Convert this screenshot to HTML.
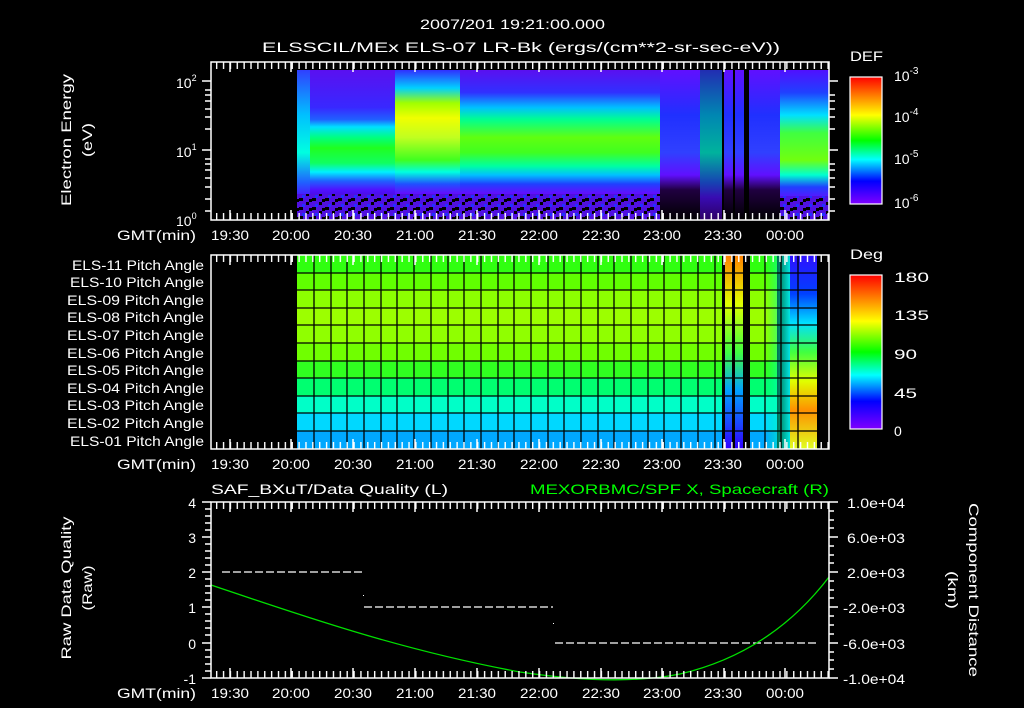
<!DOCTYPE html>
<html><head><meta charset="utf-8"><style>
html,body{margin:0;padding:0;background:#000;}
svg{display:block}
text{font-family:"Liberation Sans",sans-serif;fill:#fff;font-size:14px}
</style></head><body>
<svg width="1024" height="708" viewBox="0 0 1024 708" xmlns="http://www.w3.org/2000/svg">
<defs>
<linearGradient id="cb" x1="0" y1="0" x2="0" y2="1">
<stop offset="0" stop-color="#ff0000"/><stop offset="0.15" stop-color="#ff8000"/><stop offset="0.3" stop-color="#ffff00"/><stop offset="0.5" stop-color="#00ff00"/><stop offset="0.65" stop-color="#00ffff"/><stop offset="0.82" stop-color="#0000ff"/><stop offset="1" stop-color="#8000ff"/></linearGradient>
<linearGradient id="g0" x1="0" y1="0" x2="0" y2="1">
<stop offset="0" stop-color="#3040ff"/><stop offset="0.3" stop-color="#00c0ff"/><stop offset="0.55" stop-color="#00ffe0"/><stop offset="0.75" stop-color="#2060ff"/><stop offset="0.85" stop-color="#5010ff"/><stop offset="1" stop-color="#400090"/></linearGradient>
<linearGradient id="g1" x1="0" y1="0" x2="0" y2="1">
<stop offset="0" stop-color="#5a10f0"/><stop offset="0.25" stop-color="#3828ff"/><stop offset="0.33" stop-color="#2060ff"/><stop offset="0.38" stop-color="#00e0ff"/><stop offset="0.45" stop-color="#00ff80"/><stop offset="0.52" stop-color="#20ff20"/><stop offset="0.62" stop-color="#10ff60"/><stop offset="0.68" stop-color="#00f0ff"/><stop offset="0.74" stop-color="#2060ff"/><stop offset="0.8" stop-color="#5010ff"/><stop offset="1" stop-color="#300070"/></linearGradient>
<linearGradient id="g2" x1="0" y1="0" x2="0" y2="1">
<stop offset="0" stop-color="#3030ff"/><stop offset="0.12" stop-color="#00d0ff"/><stop offset="0.22" stop-color="#a0ff00"/><stop offset="0.32" stop-color="#f0ff00"/><stop offset="0.45" stop-color="#c0ff20"/><stop offset="0.6" stop-color="#40ff20"/><stop offset="0.68" stop-color="#00ffe0"/><stop offset="0.76" stop-color="#2050ff"/><stop offset="0.82" stop-color="#6010ff"/><stop offset="1" stop-color="#300070"/></linearGradient>
<linearGradient id="g3" x1="0" y1="0" x2="0" y2="1">
<stop offset="0" stop-color="#5a10f0"/><stop offset="0.15" stop-color="#3030ff"/><stop offset="0.25" stop-color="#00c0ff"/><stop offset="0.33" stop-color="#00ff90"/><stop offset="0.45" stop-color="#60ff10"/><stop offset="0.55" stop-color="#40ff20"/><stop offset="0.64" stop-color="#00ffa0"/><stop offset="0.7" stop-color="#00c0ff"/><stop offset="0.76" stop-color="#2040ff"/><stop offset="0.82" stop-color="#6010ff"/><stop offset="1" stop-color="#300070"/></linearGradient>
<linearGradient id="g4" x1="0" y1="0" x2="0" y2="1">
<stop offset="0" stop-color="#6010ff"/><stop offset="0.3" stop-color="#2030ff"/><stop offset="0.55" stop-color="#3040ff"/><stop offset="0.7" stop-color="#6010ff"/><stop offset="0.8" stop-color="#200040"/><stop offset="1" stop-color="#000"/></linearGradient>
<linearGradient id="g5" x1="0" y1="0" x2="0" y2="1">
<stop offset="0" stop-color="#5010ff"/><stop offset="0.15" stop-color="#2040ff"/><stop offset="0.3" stop-color="#00e0ff"/><stop offset="0.42" stop-color="#40ff40"/><stop offset="0.6" stop-color="#70ff10"/><stop offset="0.7" stop-color="#00ffd0"/><stop offset="0.78" stop-color="#2040ff"/><stop offset="0.86" stop-color="#6010ff"/><stop offset="1" stop-color="#300070"/></linearGradient>
<linearGradient id="pv" x1="0" y1="0" x2="0" y2="1"><stop offset="0" stop-color="#ff8000"/><stop offset="0.25" stop-color="#e0ff00"/><stop offset="0.5" stop-color="#40ff40"/><stop offset="0.7" stop-color="#00a0ff"/><stop offset="1" stop-color="#3000ff"/></linearGradient>
<linearGradient id="pr" x1="0" y1="0" x2="0" y2="1"><stop offset="0" stop-color="#3010ff"/><stop offset="0.2" stop-color="#0040ff"/><stop offset="0.35" stop-color="#00e0ff"/><stop offset="0.5" stop-color="#40ff40"/><stop offset="0.65" stop-color="#e0ff00"/><stop offset="0.8" stop-color="#ff9000"/><stop offset="1" stop-color="#e0ff20"/></linearGradient>
<linearGradient id="ph" x1="0" y1="0" x2="1" y2="0"><stop offset="0" stop-color="#00ff80" stop-opacity="0"/><stop offset="1" stop-color="#00ffff" stop-opacity="0.9"/></linearGradient>
<pattern id="noise" width="13" height="9" patternUnits="userSpaceOnUse">
<rect width="13" height="9" fill="#5010e0"/><rect x="0" y="0" width="4" height="3" fill="#000"/><rect x="7" y="4" width="3" height="3" fill="#000"/><rect x="3" y="6" width="3" height="3" fill="#2030ff"/><rect x="10" y="1" width="3" height="3" fill="#000"/></pattern>
<pattern id="tk" x="3" width="6.87" height="10" patternUnits="userSpaceOnUse"><rect x="0" y="0" width="1.4" height="10" fill="#fff"/></pattern>
</defs>

<text x="420" y="29" font-size="16" textLength="185" lengthAdjust="spacingAndGlyphs">2007/201 19:21:00.000</text>
<text x="262" y="52" font-size="16" textLength="518" lengthAdjust="spacingAndGlyphs">ELSSCIL/MEx ELS-07 LR-Bk  (ergs/(cm**2-sr-sec-eV))</text>

<!-- Panel 1 -->
<rect x="297" y="70" width="13" height="150" fill="url(#g0)"/>
<rect x="310" y="70" width="85" height="150" fill="url(#g1)"/>
<rect x="395" y="70" width="65" height="150" fill="url(#g2)"/>
<rect x="460" y="70" width="200" height="150" fill="url(#g3)"/>
<rect x="660" y="70" width="40" height="150" fill="url(#g4)"/>
<rect x="700" y="70" width="22" height="150" fill="url(#g0)" opacity="0.7"/>
<rect x="722" y="70" width="58" height="150" fill="url(#g4)"/>
<rect x="780" y="70" width="49" height="150" fill="url(#g5)"/>
<rect x="297" y="194" width="363" height="26" fill="url(#noise)"/>
<rect x="780" y="196" width="49" height="24" fill="url(#noise)"/>
<rect x="722" y="70" width="2" height="150" fill="#000"/>
<rect x="733" y="70" width="2" height="150" fill="#000"/>
<rect x="744" y="70" width="5" height="150" fill="#000"/>
<rect x="211" y="62" width="618" height="158" fill="none" stroke="#fff" stroke-width="1.5"/>
<rect x="211" y="62" width="618" height="7" fill="url(#tk)"/>
<rect x="211" y="213" width="618" height="7" fill="url(#tk)"/>
<g stroke="#fff" stroke-width="1.5">
<path d="M230 62v10M291 62v10M353 62v10M415 62v10M477 62v10M539 62v10M601 62v10M662 62v10M724 62v10M785 62v10M230 220v-10M291 220v-10M353 220v-10M415 220v-10M477 220v-10M539 220v-10M601 220v-10M662 220v-10M724 220v-10M785 220v-10"/>
<path d="M202 81h9M202 150h9M205 199h6M205 187h6M205 178h6M205 170h6M205 164h6M205 159h6M205 129h6M205 117h6M205 109h6M205 101h6M205 95h6M205 90h6M829 81h9M829 150h9M829 199h6M829 187h6M829 178h6M829 170h6M829 164h6M829 129h6M829 117h6M829 109h6M829 101h6M829 95h6M205 211h6M829 211h6"/>
</g>
<text x="176" y="88" font-size="14">10<tspan font-size="9" dy="-7">2</tspan></text>
<text x="176" y="157" font-size="14">10<tspan font-size="9" dy="-7">1</tspan></text>
<text x="176" y="226" font-size="14">10<tspan font-size="9" dy="-7">0</tspan></text>
<text transform="translate(71 140) rotate(-90)" text-anchor="middle" font-size="15" textLength="132" lengthAdjust="spacingAndGlyphs">Electron Energy</text>
<text transform="translate(92 140) rotate(-90)" text-anchor="middle" font-size="15" textLength="34" lengthAdjust="spacingAndGlyphs">(eV)</text>
<g font-size="14">
<text x="117" y="240" textLength="79" lengthAdjust="spacingAndGlyphs">GMT(min)</text>
<text x="230" y="240" text-anchor="middle" textLength="38" lengthAdjust="spacingAndGlyphs">19:30</text><text x="291" y="240" text-anchor="middle" textLength="38" lengthAdjust="spacingAndGlyphs">20:00</text><text x="353" y="240" text-anchor="middle" textLength="38" lengthAdjust="spacingAndGlyphs">20:30</text><text x="415" y="240" text-anchor="middle" textLength="38" lengthAdjust="spacingAndGlyphs">21:00</text><text x="477" y="240" text-anchor="middle" textLength="38" lengthAdjust="spacingAndGlyphs">21:30</text><text x="539" y="240" text-anchor="middle" textLength="38" lengthAdjust="spacingAndGlyphs">22:00</text><text x="601" y="240" text-anchor="middle" textLength="38" lengthAdjust="spacingAndGlyphs">22:30</text><text x="662" y="240" text-anchor="middle" textLength="38" lengthAdjust="spacingAndGlyphs">23:00</text><text x="723" y="240" text-anchor="middle" textLength="38" lengthAdjust="spacingAndGlyphs">23:30</text><text x="785" y="240" text-anchor="middle" textLength="38" lengthAdjust="spacingAndGlyphs">00:00</text>
</g>
<text x="850" y="61" font-size="16" textLength="33" lengthAdjust="spacingAndGlyphs">DEF</text>
<rect x="850" y="77" width="32" height="127" fill="url(#cb)" stroke="#fff" stroke-width="1.2"/>
<g font-size="16"><text x="894" y="81">10<tspan font-size="10" dy="-7">-3</tspan></text><text x="894" y="122">10<tspan font-size="10" dy="-7">-4</tspan></text><text x="894" y="164">10<tspan font-size="10" dy="-7">-5</tspan></text><text x="894" y="208">10<tspan font-size="10" dy="-7">-6</tspan></text></g>

<!-- Panel 2 -->
<rect x="297" y="255" width="480" height="18" fill="#30ff10"/>
<rect x="297" y="273" width="480" height="17" fill="#60ff00"/>
<rect x="297" y="290" width="480" height="18" fill="#8cff00"/>
<rect x="297" y="308" width="480" height="17" fill="#9cff00"/>
<rect x="297" y="325" width="480" height="18" fill="#90ff00"/>
<rect x="297" y="343" width="480" height="18" fill="#70ff00"/>
<rect x="297" y="361" width="480" height="17" fill="#30ff20"/>
<rect x="297" y="378" width="480" height="18" fill="#00ff70"/>
<rect x="297" y="396" width="480" height="17" fill="#00ffc8"/>
<rect x="297" y="413" width="480" height="18" fill="#00d8ff"/>
<rect x="297" y="431" width="480" height="18" fill="#00a8ff"/>
<rect x="722" y="255" width="28" height="194" fill="url(#pv)"/>
<rect x="765" y="255" width="25" height="194" fill="url(#ph)"/>
<rect x="790" y="255" width="27" height="194" fill="url(#pr)"/>
<rect x="722" y="255" width="3" height="194" fill="#000"/>
<rect x="732" y="255" width="3" height="194" fill="#000"/>
<rect x="743" y="255" width="7" height="194" fill="#000"/>
<g stroke="#000" stroke-width="1.3">
<path d="M297 273h520M297 290h520M297 308h520M297 325h520M297 343h520M297 361h520M297 378h520M297 396h520M297 413h520M297 431h520"/>
<path d="M314 255v194M331 255v194M347 255v194M364 255v194M381 255v194M397 255v194M414 255v194M431 255v194M448 255v194M464 255v194M481 255v194M498 255v194M514 255v194M531 255v194M548 255v194M564 255v194M581 255v194M598 255v194M614 255v194M631 255v194M648 255v194M664 255v194M681 255v194M698 255v194M715 255v194M765 255v194M781 255v194M798 255v194"/>
</g>
<rect x="211" y="255" width="618" height="194" fill="none" stroke="#fff" stroke-width="1.5"/>
<rect x="211" y="255" width="618" height="7" fill="url(#tk)"/>
<rect x="211" y="442" width="618" height="7" fill="url(#tk)"/>
<g stroke="#fff" stroke-width="1.5"><path d="M230 255v10M291 255v10M353 255v10M415 255v10M477 255v10M539 255v10M601 255v10M662 255v10M724 255v10M785 255v10M230 449v-10M291 449v-10M353 449v-10M415 449v-10M477 449v-10M539 449v-10M601 449v-10M662 449v-10M724 449v-10M785 449v-10"/></g>
<g font-size="14">
<text x="72" y="270" textLength="132" lengthAdjust="spacingAndGlyphs">ELS-11 Pitch Angle</text><text x="70" y="287" textLength="134" lengthAdjust="spacingAndGlyphs">ELS-10 Pitch Angle</text><text x="67" y="305" textLength="137" lengthAdjust="spacingAndGlyphs">ELS-09 Pitch Angle</text><text x="67" y="322" textLength="137" lengthAdjust="spacingAndGlyphs">ELS-08 Pitch Angle</text><text x="67" y="340" textLength="137" lengthAdjust="spacingAndGlyphs">ELS-07 Pitch Angle</text><text x="67" y="358" textLength="137" lengthAdjust="spacingAndGlyphs">ELS-06 Pitch Angle</text><text x="67" y="375" textLength="137" lengthAdjust="spacingAndGlyphs">ELS-05 Pitch Angle</text><text x="67" y="393" textLength="137" lengthAdjust="spacingAndGlyphs">ELS-04 Pitch Angle</text><text x="67" y="410" textLength="137" lengthAdjust="spacingAndGlyphs">ELS-03 Pitch Angle</text><text x="67" y="428" textLength="137" lengthAdjust="spacingAndGlyphs">ELS-02 Pitch Angle</text><text x="70" y="446" textLength="134" lengthAdjust="spacingAndGlyphs">ELS-01 Pitch Angle</text>
</g>
<g font-size="14">
<text x="117" y="469" textLength="79" lengthAdjust="spacingAndGlyphs">GMT(min)</text>
<text x="230" y="469" text-anchor="middle" textLength="38" lengthAdjust="spacingAndGlyphs">19:30</text><text x="291" y="469" text-anchor="middle" textLength="38" lengthAdjust="spacingAndGlyphs">20:00</text><text x="353" y="469" text-anchor="middle" textLength="38" lengthAdjust="spacingAndGlyphs">20:30</text><text x="415" y="469" text-anchor="middle" textLength="38" lengthAdjust="spacingAndGlyphs">21:00</text><text x="477" y="469" text-anchor="middle" textLength="38" lengthAdjust="spacingAndGlyphs">21:30</text><text x="539" y="469" text-anchor="middle" textLength="38" lengthAdjust="spacingAndGlyphs">22:00</text><text x="601" y="469" text-anchor="middle" textLength="38" lengthAdjust="spacingAndGlyphs">22:30</text><text x="662" y="469" text-anchor="middle" textLength="38" lengthAdjust="spacingAndGlyphs">23:00</text><text x="723" y="469" text-anchor="middle" textLength="38" lengthAdjust="spacingAndGlyphs">23:30</text><text x="785" y="469" text-anchor="middle" textLength="38" lengthAdjust="spacingAndGlyphs">00:00</text>
</g>
<text x="850" y="259" font-size="16" textLength="33" lengthAdjust="spacingAndGlyphs">Deg</text>
<rect x="850" y="275" width="32" height="154" fill="url(#cb)" stroke="#fff" stroke-width="1.2"/>
<g font-size="17"><text x="894" y="282" textLength="35" lengthAdjust="spacingAndGlyphs">180</text><text x="894" y="320" textLength="35" lengthAdjust="spacingAndGlyphs">135</text><text x="894" y="359" textLength="23" lengthAdjust="spacingAndGlyphs">90</text><text x="894" y="398" textLength="23" lengthAdjust="spacingAndGlyphs">45</text><text x="894" y="436">0</text></g>

<!-- Panel 3 -->
<text x="211" y="494" font-size="16" textLength="237" lengthAdjust="spacingAndGlyphs">SAF_BXuT/Data Quality (L)</text>
<text x="530" y="494" font-size="16" textLength="299" lengthAdjust="spacingAndGlyphs" style="fill:#00ff00">MEXORBMC/SPF X, Spacecraft (R)</text>
<g stroke="#fff" stroke-width="1.3" stroke-dasharray="8 3">
<path d="M222 572H363M364 607H553M555 643H817"/></g>
<rect x="363" y="595" width="1" height="1" fill="#fff"/><rect x="553" y="623" width="1" height="1" fill="#fff"/>
<path d="M211 585 C300 615 400 650 520 672 C600 684 650 680 680 674 C740 660 790 628 829 577" fill="none" stroke="#00e000" stroke-width="1.3"/>
<rect x="211" y="502" width="618" height="176" fill="none" stroke="#fff" stroke-width="1.5"/>
<rect x="211" y="502" width="618" height="7" fill="url(#tk)"/>
<rect x="211" y="671" width="618" height="7" fill="url(#tk)"/>
<g stroke="#fff" stroke-width="1.5">
<path d="M230 502v10M291 502v10M353 502v10M415 502v10M477 502v10M539 502v10M601 502v10M662 502v10M724 502v10M785 502v10M230 678v-10M291 678v-10M353 678v-10M415 678v-10M477 678v-10M539 678v-10M601 678v-10M662 678v-10M724 678v-10M785 678v-10"/>
<path d="M202 502h9M202 537h9M202 572h9M202 607h9M202 643h9M202 678h9M205 509h6M205 516h6M205 523h6M205 530h6M205 544h6M205 551h6M205 558h6M205 565h6M205 579h6M205 586h6M205 593h6M205 600h6M205 614h6M205 621h6M205 628h6M205 635h6M205 650h6M205 657h6M205 664h6M205 671h6"/>
<path d="M829 502h9M829 537h9M829 572h9M829 607h9M829 643h9M829 678h9M829 511h5M829 520h5M829 528h5M829 546h5M829 555h5M829 563h5M829 581h5M829 590h5M829 598h5M829 616h5M829 625h5M829 634h5M829 652h5M829 660h5M829 669h5"/>
</g>
<g font-size="14" text-anchor="end"><text x="196" y="508">4</text><text x="196" y="543">3</text><text x="196" y="578">2</text><text x="196" y="613">1</text><text x="196" y="649">0</text><text x="196" y="684">-1</text></g>
<g font-size="14"><text x="847" y="508" textLength="58" lengthAdjust="spacingAndGlyphs">1.0e+04</text><text x="847" y="543" textLength="58" lengthAdjust="spacingAndGlyphs">6.0e+03</text><text x="847" y="578" textLength="58" lengthAdjust="spacingAndGlyphs">2.0e+03</text><text x="843" y="613" textLength="62" lengthAdjust="spacingAndGlyphs">-2.0e+03</text><text x="843" y="649" textLength="62" lengthAdjust="spacingAndGlyphs">-6.0e+03</text><text x="843" y="684" textLength="62" lengthAdjust="spacingAndGlyphs">-1.0e+04</text></g>
<text transform="translate(71 588) rotate(-90)" text-anchor="middle" font-size="15" textLength="143" lengthAdjust="spacingAndGlyphs">Raw Data Quality</text>
<text transform="translate(92 588) rotate(-90)" text-anchor="middle" font-size="15" textLength="45" lengthAdjust="spacingAndGlyphs">(Raw)</text>
<text transform="translate(969 590) rotate(90)" text-anchor="middle" font-size="15" textLength="174" lengthAdjust="spacingAndGlyphs">Component Distance</text>
<text transform="translate(948 590) rotate(90)" text-anchor="middle" font-size="15" textLength="38" lengthAdjust="spacingAndGlyphs">(km)</text>
<g font-size="14">
<text x="117" y="698" textLength="79" lengthAdjust="spacingAndGlyphs">GMT(min)</text>
<text x="230" y="698" text-anchor="middle" textLength="38" lengthAdjust="spacingAndGlyphs">19:30</text><text x="291" y="698" text-anchor="middle" textLength="38" lengthAdjust="spacingAndGlyphs">20:00</text><text x="353" y="698" text-anchor="middle" textLength="38" lengthAdjust="spacingAndGlyphs">20:30</text><text x="415" y="698" text-anchor="middle" textLength="38" lengthAdjust="spacingAndGlyphs">21:00</text><text x="477" y="698" text-anchor="middle" textLength="38" lengthAdjust="spacingAndGlyphs">21:30</text><text x="539" y="698" text-anchor="middle" textLength="38" lengthAdjust="spacingAndGlyphs">22:00</text><text x="601" y="698" text-anchor="middle" textLength="38" lengthAdjust="spacingAndGlyphs">22:30</text><text x="662" y="698" text-anchor="middle" textLength="38" lengthAdjust="spacingAndGlyphs">23:00</text><text x="723" y="698" text-anchor="middle" textLength="38" lengthAdjust="spacingAndGlyphs">23:30</text><text x="785" y="698" text-anchor="middle" textLength="38" lengthAdjust="spacingAndGlyphs">00:00</text>
</g>
</svg>
</body></html>
